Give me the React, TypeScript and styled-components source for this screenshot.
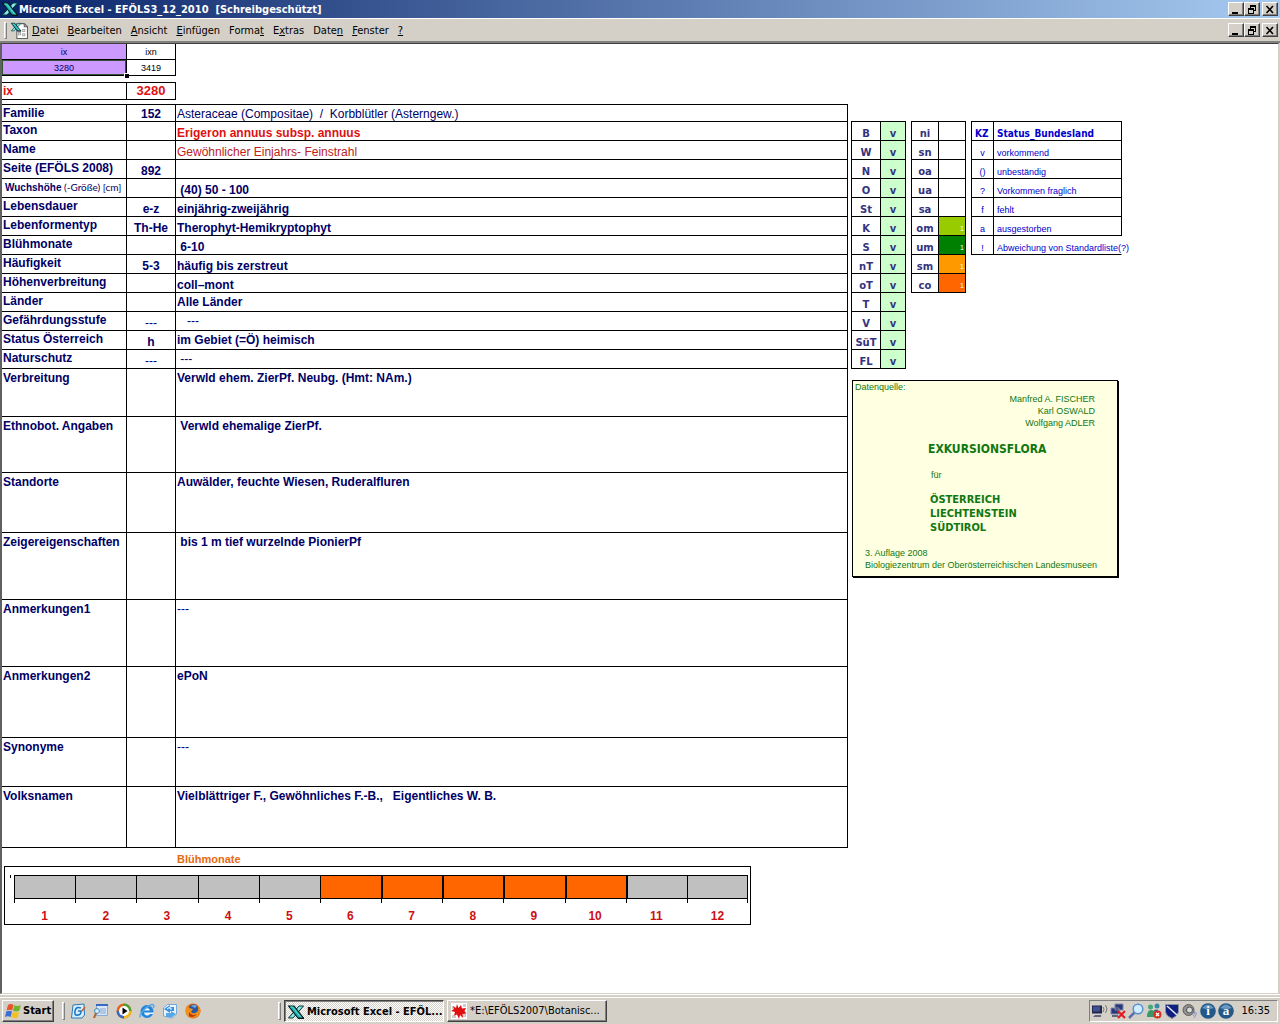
import React from "react";
import styled, { createGlobalStyle, css } from "styled-components";

const face = "#d4d0c8";
const navy = "#000066";
const ui = '"DejaVu Sans Condensed", "DejaVu Sans", sans-serif';
const arial = '"Liberation Sans", Arial, sans-serif';
const narrow = 'Lato, "Liberation Sans", sans-serif';

const GlobalStyle = createGlobalStyle`
  *, *::before { box-sizing: border-box; }
  body { margin: 0; background: ${face}; font-family: ${arial}; font-size: 12px; color: ${navy}; }
  button { font: inherit; color: inherit; padding: 0; border: 0; background: none; }
  table { border-collapse: separate; border-spacing: 0; }
  h1, p { margin: 0; }
`;

const raised = css`
  border: 1px solid;
  border-color: #ffffff #404040 #404040 #ffffff;
  box-shadow: inset -1px -1px 0 #808080;
`;

const Desktop = styled.div`
  display: flex;
  flex-direction: column;
  min-height: 100vh;
`;

const TitleBar = styled.header`
  display: flex;
  align-items: center;
  height: 18px;
  padding: 0 2px;
  gap: 1px;
  background: linear-gradient(90deg, #0a246a, #a6caf0);
`;

const Title = styled.h1`
  flex: 1;
  padding-top: 2px;
  font: bold 11px/16px ${ui};
  color: #fff;
  white-space: pre;
`;

const MenuBar = styled.nav`
  display: flex;
  align-items: center;
  height: 25px;
  padding: 0 2px 0 4px;
  border-top: 1px solid #fff;
  border-bottom: 2px solid #808080;
  background: ${face};
`;

const Grip = styled.span`
  width: 3px;
  height: ${(p: { $h?: number }) => p.$h ?? 17}px;
  border: 1px solid;
  border-color: #fff #808080 #808080 #fff;
`;

const BookIcon = styled.span`
  display: flex;
  padding: 0 4px;
`;

const Menus = styled.div`
  display: flex;
  flex: 1;
  gap: 9px;
  padding-top: 2px;
`;

const MenuButton = styled.button`
  font: 11px/16px ${ui};
  color: #000;
`;

const WindowButtons = styled.div`
  display: flex;
`;

const WindowButton = styled.button`
  ${raised}
  display: flex;
  align-items: center;
  justify-content: center;
  width: 16px;
  height: 14px;
  background: ${face};
  &:last-child { margin-left: 2px; }
`;

const Sheet = styled.main`
  flex: 1;
  display: grid;
  grid-template-columns: minmax(0, 1fr) 430px;
  align-items: start;
  margin-right: 1px;
  border: 1px solid #404040;
  border-left: 2px solid #606060;
  border-right: 1px solid ${face};
  border-bottom: 1px solid ${face};
  background: #fff;
`;

const Left = styled.div`
  min-width: 0;
`;

const Grid = styled.table`
  table-layout: fixed;
  td, th {
    padding: 0 1px;
    border-right: 1px solid #000;
    border-bottom: 1px solid #000;
    white-space: pre;
  }
`;

const IndexTable = styled(Grid)`
  width: 174px;
  font-size: 9px;
  line-height: 14px;
  text-align: center;
  th { font-weight: normal; }
`;

const IndexCell = styled.td<{ $fill?: boolean; $active?: boolean }>`
  position: relative;
  height: 16px;
  color: ${(p) => (p.$fill ? navy : "#000")};
  background: ${(p) => (p.$fill ? "#cc99ff" : "#fff")};
  ${(p) => p.$active && "box-shadow: inset 0 0 0 1px #335533;"}
`;

const FillHandle = styled.span`
  position: absolute;
  z-index: 1;
  right: -3px;
  bottom: -3px;
  width: 5px;
  height: 5px;
  border: solid #fff;
  border-width: 1px 0 0 1px;
  background: #000;
`;

const KeyTable = styled(Grid)`
  width: 174px;
  margin-top: 6px;
  border-top: 1px solid #000;
  font-weight: bold;
  color: #dd1111;
  th { height: 17px; text-align: left; }
  td { font-size: 13px; line-height: 16px; text-align: center; }
`;

const Records = styled(Grid)`
  width: 100%;
  margin-top: 4px;
  border-top: 1px solid #000;
  font-weight: bold;
`;

const Row = styled.tr<{ $h: number }>`
  height: ${(p) => p.$h}px;
`;

const Label = styled.th<{ $small?: boolean; $tall?: boolean }>`
  text-align: left;
  vertical-align: top;
  line-height: ${(p) => (p.$tall ? 18 : 16)}px;
  ${(p) => p.$small && `&& { padding-left: 3px; } font: bold 10px/16px ${arial};`}
  span { font: 10px/16px ${narrow}; }
`;

const Code = styled.td<{ $light?: boolean }>`
  text-align: center;
  vertical-align: bottom;
  line-height: 13px;
  ${(p) => p.$light && "font-weight: normal;"}
`;

type Tone = "plain" | "red" | "crimson";
const Value = styled.td<{ $top?: boolean; $tone?: Tone }>`
  vertical-align: ${(p) => (p.$top ? "top" : "bottom")};
  line-height: ${(p) => (p.$top ? 18 : 13)}px;
  ${(p) => p.$tone === "plain" && "font-weight: normal;"}
  ${(p) => p.$tone === "red" && "color: #dd1111;"}
  ${(p) => p.$tone === "crimson" && "font-weight: normal; color: #bb2222;"}
`;

const ChartTitle = styled.p`
  padding: 5px 0 0 175px;
  height: 18px;
  font: bold 11px/13px ${arial};
  color: #e66a10;
`;

const Chart = styled.section`
  display: flex;
  margin: 0 97px 0 2px;
  height: 59px;
  padding: 8px 2px 0 5px;
  border: 1px solid #000;
`;

const AxisMark = styled.span`
  width: 1px;
  height: 3px;
  margin-right: 3px;
  background: #000;
`;

const Months = styled.ol`
  display: grid;
  grid-template-columns: repeat(12, 1fr);
  flex: 1;
  margin: 0;
  padding: 0;
  list-style: none;
`;

const Month = styled.li<{ $on: boolean; $thick: boolean }>`
  text-align: center;
  font: bold 12px/16px ${arial};
  color: #cc1111;
  &::before {
    content: "";
    display: block;
    height: 24px;
    border: solid #000;
    border-width: 1px 0 1px ${(p) => (p.$thick ? 2 : 1)}px;
    background: ${(p) => (p.$on ? "#ff6600" : "#c0c0c0")};
  }
  &:last-child::before { border-right-width: 1px; }
`;

const Tick = styled.span`
  display: block;
  height: 4px;
  margin-bottom: 5px;
  border-left: 1px solid #000;
  ${Month}:last-child & { border-right: 1px solid #000; }
`;

const Right = styled.aside`
  padding: 77px 0 0 3px;
`;

const Tables = styled.div`
  display: flex;
  align-items: flex-start;
  gap: 5px;
`;

const Legend = styled(Grid)<{ $w: number }>`
  width: ${(p) => p.$w}px;
  border-top: 1px solid #000;
  border-left: 1px solid #000;
  font: 9px/12px ${arial};
  color: #0000cc;
  tr { height: 19px; }
  td, th { vertical-align: bottom; }
`;

const Region = styled.th`
  text-align: center;
  font: bold 10px/12px "DejaVu Sans", sans-serif;
  color: #333380;
`;

const Mark = styled.td<{ $bg?: string }>`
  text-align: center;
  font: bold 10px/12px "DejaVu Sans", sans-serif;
  color: #333380;
  background: ${(p) => p.$bg ?? "#fff"};
`;

const Zone = styled.td<{ $bg: string }>`
  text-align: right;
  font-size: 7px;
  color: #fff;
  background: ${(p) => p.$bg};
`;

const Key = styled.td`
  text-align: center;
`;

const Meaning = styled.td<{ $open?: boolean }>`
  && { padding-left: 3px; ${(p) => p.$open && "border-right-color: transparent;"} }
`;

const Head = styled.th`
  && { padding-left: 3px; }
  text-align: left;
  font: bold 10px/12px ${ui};
  color: #0000cc;
`;

const Source = styled.section`
  width: 266px;
  height: 197px;
  margin: 11px 0 0 1px;
  padding: 0 12px 0 2px;
  border: 1px solid #000;
  box-shadow: 1px 1px 0 #000;
  background: #ffffe1;
  color: #117711;
  font: 9px/12px ${arial};
`;

const Authors = styled.p`
  padding: 0 10px 0 0;
  text-align: right;
`;

const Work = styled.p`
  margin: 8px 0 0 73px;
  font: bold 12px/24px ${ui};
`;

const For = styled.p`
  margin: 8px 0 12px 76px;
`;

const Places = styled.p`
  margin-left: 75px;
  font: bold 11px/14px ${ui};
`;

const Imprint = styled.p`
  margin: 12px 0 0 10px;
  white-space: nowrap;
`;

const TaskBar = styled.footer`
  display: flex;
  align-items: center;
  height: 30px;
  padding: 3px 2px 0;
  border-top: 1px solid #fff;
  background: linear-gradient(${face} 2px, #fff 2px, #fff 3px, ${face} 3px);
  color: #000;
  font: 11px/16px ${ui};
`;

const StartButton = styled.button`
  ${raised}
  display: flex;
  align-items: center;
  gap: 2px;
  width: 52px;
  height: 22px;
  padding-left: 2px;
  font-weight: bold;
`;

const Quick = styled.div`
  display: flex;
  gap: 7px;
  width: 213px;
  padding-left: 5px;
`;

const IconButton = styled.button`
  display: flex;
  width: 16px;
  height: 16px;
`;

const Divider = styled(Grip)`
  margin-left: 8px;
`;

const Tasks = styled.div`
  display: flex;
  flex: 1;
  gap: 3px;
  padding-left: 3px;
`;

const Task = styled.button<{ $on?: boolean }>`
  ${raised}
  display: flex;
  align-items: center;
  gap: 3px;
  width: 160px;
  height: 22px;
  padding-left: 3px;
  white-space: nowrap;
  overflow: hidden;
  ${(p) =>
    p.$on &&
    css`
      font-weight: bold;
      padding-top: 1px;
      border-color: #404040 #fff #fff #404040;
      box-shadow: inset 1px 1px 0 #808080;
      background: repeating-conic-gradient(#fff 0 25%, ${face} 0 50%) 0 0 / 2px 2px;
    `}
`;

const Tray = styled.div`
  display: flex;
  align-items: center;
  gap: 2px;
  height: 22px;
  padding: 0 7px 0 2px;
  border: 1px solid;
  border-color: #808080 #fff #fff #808080;
  time { padding-left: 5px; }
`;

const Svg = ({ children, s = 16 }: { children: React.ReactNode; s?: number }) => (
  <svg width={s} height={s} viewBox="0 0 16 16" aria-hidden="true">
    {children}
  </svg>
);

const xMark = (
  <>
    <path d="M11 2h4.500L5 14H.5z" fill="#8ce8e8" stroke="#003838" strokeWidth="1" />
    <path d="M.5 2h5.500L15.500 14H10z" fill="#20b0b0" stroke="#001818" strokeWidth="1.200" />
    <path d="M2.500 3h2l8.500 10.500" fill="none" stroke="#60dcdc" />
    <path d="M10 14.500h6" stroke="#001818" />
  </>
);

const ExcelIcon = () => <Svg>{xMark}</Svg>;

const BookDrawing = () => (
  <Svg s={17}>
    <path d="M5.500 1.500h7l3 3v11h-10z" fill="#fff" stroke="#606060" />
    <path d="M12.500 1.500v3h3" fill="none" stroke="#606060" />
    <path d="M7 10h2v2H7zM11 7h2v2h-2zM11 11h2v2h-2z" fill="#fff" stroke="#a8a8a8" />
    <g transform="scale(.6)">{xMark}</g>
  </Svg>
);

const Min = () => (
  <svg width="10" height="9" viewBox="0 0 10 9" shapeRendering="crispEdges" aria-hidden="true">
    <path d="M1 7h6v2H1z" />
  </svg>
);
const Restore = () => (
  <svg width="10" height="9" viewBox="0 0 10 9" shapeRendering="crispEdges" aria-hidden="true">
    <path d="M3 0h6v6H7V5h1V2H4v1H3zM1 3h6v6H1zM2 5v3h4V5z" fillRule="evenodd" />
  </svg>
);
const Close = () => (
  <svg width="10" height="9" viewBox="0 0 10 9" aria-hidden="true">
    <path d="M1.500 1l6.500 7M8 1L1.500 8" stroke="#000" strokeWidth="1.600" />
  </svg>
);

const Flag = () => (
  <Svg>
    <path d="M3 2q3-2 5.500 0L7.200 7.500Q4.500 6 1.500 7.500z" fill="#e8542c" />
    <path d="M9.300 2.300q3 1.500 6.500 0L14.300 7.800q-3 1.500-6.300 0z" fill="#6fb52c" />
    <path d="M1.300 8.500q3-1.500 5.700 0L5.700 14Q3 12.500 0 14z" fill="#3a6fd8" />
    <path d="M7.800 8.800q3 1.500 6.300 0L12.800 14.500q-3 1.500-6.300 0z" fill="#f4c020" />
  </Svg>
);

const OutlookIcon = () => (
  <Svg>
    <path d="M3 2l11-1 .5 11-2.500 3H1.500z" fill="#dceefc" stroke="#2878b8" />
    <path d="M11 5q-5-2-6 3t3 4q3 0 3-4H8" fill="none" stroke="#1878c8" strokeWidth="1.600" />
    <path d="M12 8l3-4" stroke="#d06020" strokeWidth="1.500" />
  </Svg>
);
const DesktopIcon = () => (
  <Svg>
    <path d="M3.500 1.500h11v11h-11z" fill="#d8e8fa" stroke="#88a8d8" />
    <path d="M3 1h12v2H3z" fill="#3868c0" />
    <path d="M7 6h6M7 8h6M7 10h6" stroke="#8aa4d0" />
    <circle cx="4" cy="8" r="2.500" fill="#c8f0ff" stroke="#5088b0" />
    <path d="M3 10l-2 5" stroke="#b06030" strokeWidth="2" />
  </Svg>
);
const PlayerIcon = () => (
  <Svg>
    <circle cx="8" cy="8" r="7.500" fill="#e86018" />
    <path d="M8 8V.5A7.500 7.500 0 0115.500 8z" fill="#50a030" />
    <path d="M8 8h7.500A7.500 7.500 0 018 15.500z" fill="#f0b820" />
    <path d="M8 8v7.500A7.500 7.500 0 01.5 8z" fill="#3868c8" />
    <circle cx="8" cy="8" r="5" fill="#fff" />
    <path d="M6.500 4.500l5 3.500-5 3.500z" />
  </Svg>
);
const ExplorerIcon = () => (
  <Svg>
    <circle cx="8" cy="8.500" r="6.500" fill="#2484d8" />
    <path d="M5 7.500q.5-2.500 3-2.500t3 2.500zM5 9.500h9.500v1.500h-3.500q-1 1.500-3 1.500-2.500 0-3-3z" fill="#e4f2fc" />
    <path d="M1.500 14.500C-1 12 8 2.500 13 1.500c3 0 2 2 1 3.500" fill="none" stroke="#58a8e8" strokeWidth="1.400" />
  </Svg>
);
const MailIcon = () => (
  <Svg>
    <path d="M1.500 5l4-3.500h9V11l-4 4-9-2z" fill="#e8f4ff" stroke="#78a8d8" />
    <path d="M2 6l6-4v2h4v4H8v2z" fill="#3890e0" />
    <path d="M14 11l-5-3v2H4v4h5v1z" fill="#58a8e8" />
    <path d="M5 6l3-2v2h2" stroke="#fff" fill="none" />
  </Svg>
);
const FoxIcon = () => (
  <Svg>
    <circle cx="8" cy="8" r="7.500" fill="#e06010" />
    <circle cx="8.500" cy="6.500" r="5" fill="#2858a8" />
    <path d="M6 3q3-2 6 0l-2 2z" fill="#70a8e0" />
    <path d="M1 4l2-2 1 3 4 1-2 3q3 3 7-1 1-4-1-6 5 3 3 8-3 6-9 5Q-1 12 1 4z" fill="#f09018" />
    <path d="M4 9q3 5 8 2-4 5-8 2z" fill="#b83808" />
  </Svg>
);
const LeafIcon = () => (
  <Svg>
    <path d="M0 0h16v16H0z" fill="#fff" />
    <path d="M1 3h2v3H1zM12 1h3v3h-3zM1 12h4v3H1zM12 11h3v3h-3z" fill="#ccc" />
    <path d="M6 1l1.500 4L10 2l1 3.500L15 5l-1.500 3 2 2.500-4 .5.500 4-3-3L8 16l-2-4.500-3 1L4 9 0 8l3-2-1-3 3 2z" fill="#e01010" />
  </Svg>
);
const Terminal = () => (
  <Svg>
    <path d="M0 2.500h10v8H0z" fill="#202850" />
    <path d="M1 3.500h7v5H1z" fill="#405090" />
    <path d="M3 12h6v2H1z" fill="#606878" />
    <path d="M11 4q2 2 0 5M13.500 2q3 4 0 8" fill="none" stroke="#777" />
  </Svg>
);
const NetworkDown = () => (
  <Svg>
    <path d="M5 1h8v6H5zM1 5h8v6H1z" fill="#28387c" stroke="#8088a8" />
    <path d="M2 12h6v2H2z" fill="#606878" />
    <path d="M8 8l7 7M15 8l-7 7" stroke="#e02020" strokeWidth="2.200" />
  </Svg>
);
const Search = () => (
  <Svg>
    <path d="M7 9l-6 6" stroke="#5870a8" strokeWidth="2.500" />
    <circle cx="10" cy="6" r="4.800" fill="#d0ecff" stroke="#5890d0" strokeWidth="1.500" />
  </Svg>
);
const Messenger = () => (
  <Svg>
    <circle cx="4.500" cy="4" r="2.500" fill="#48a878" />
    <path d="M1 14q0-7 4-7t5 5v2z" fill="#389868" />
    <circle cx="11" cy="3" r="2.500" fill="#3888a8" />
    <path d="M8 7q5-2 6 4H9z" fill="#286890" />
    <circle cx="11.500" cy="11.500" r="4" fill="#d83020" />
    <path d="M10 10l3 3M13 10l-3 3" stroke="#fff" strokeWidth="1.300" />
  </Svg>
);
const Shield = () => (
  <Svg>
    <path d="M1.500 1.500h13V9q-1 4-6.500 6.500Q2 13 1.500 9z" fill="#102080" stroke="#8890a0" />
    <path d="M3 3l10 9" stroke="#e8e8f8" strokeWidth="1.500" />
  </Svg>
);
const Speaker = () => (
  <Svg>
    <circle cx="6.500" cy="7" r="5.500" fill="#909090" stroke="#606060" />
    <circle cx="7.500" cy="7" r="3" fill="#d8d8d8" stroke="#505050" />
    <path d="M12 8q2 2-1 5M14 9q1 3-2 6" fill="none" stroke="#8890d0" />
  </Svg>
);
const Disc = ({ letter }: { letter: string }) => (
  <Svg>
    <circle cx="8" cy="8" r="7.800" fill="#245888" />
    <path d="M2 5q6-7 12 0-6 2-12 0z" fill="#6898c0" />
    <text x="8" y="12" textAnchor="middle" fill="#fff" fontFamily="Liberation Serif" fontWeight="bold" fontSize="13">
      {letter}
    </text>
  </Svg>
);

const Controls = ({ target }: { target: string }) => (
  <WindowButtons>
    <WindowButton aria-label={`${target} minimieren`}><Min /></WindowButton>
    <WindowButton aria-label={`${target} wiederherstellen`}><Restore /></WindowButton>
    <WindowButton aria-label={`${target} schließen`}><Close /></WindowButton>
  </WindowButtons>
);

const menus: [string, string, string][] = [
  ["", "D", "atei"], ["", "B", "earbeiten"], ["", "A", "nsicht"], ["", "E", "infügen"],
  ["Forma", "t", ""], ["E", "x", "tras"], ["Date", "n", ""], ["", "F", "enster"], ["", "?", ""],
];

type Rec = { label: string; note?: string; code?: string; value?: string; h?: number; top?: boolean; tone?: Tone };
const records: Rec[] = [
  { label: "Familie", code: "152", value: "Asteraceae (Compositae)  /  Korbblütler (Asterngew.)", h: 17, tone: "plain" },
  { label: "Taxon", value: "Erigeron annuus subsp. annuus", tone: "red" },
  { label: "Name", value: "Gewöhnlicher Einjahrs- Feinstrahl", tone: "crimson" },
  { label: "Seite (EFÖLS 2008)", code: "892" },
  { label: "Wuchshöhe", note: " (-Größe) [cm]", value: " (40) 50 - 100" },
  { label: "Lebensdauer", code: "e-z", value: "einjährig-zweijährig" },
  { label: "Lebenformentyp", code: "Th-He", value: "Therophyt-Hemikryptophyt" },
  { label: "Blühmonate", value: " 6-10" },
  { label: "Häufigkeit", code: "5-3", value: "häufig bis zerstreut" },
  { label: "Höhenverbreitung", value: "coll–mont" },
  { label: "Länder", value: "Alle Länder", top: true },
  { label: "Gefährdungsstufe", code: "---", value: "   ---", top: true, tone: "plain" },
  { label: "Status Österreich", code: "h", value: "im Gebiet (=Ö) heimisch", top: true },
  { label: "Naturschutz", code: "---", value: " ---", top: true, tone: "plain" },
  { label: "Verbreitung", value: "Verwld ehem. ZierPf. Neubg. (Hmt: NAm.)", h: 48, top: true },
  { label: "Ethnobot. Angaben", value: " Verwld ehemalige ZierPf.", h: 56, top: true },
  { label: "Standorte", value: "Auwälder, feuchte Wiesen, Ruderalfluren", h: 60, top: true },
  { label: "Zeigereigenschaften", value: " bis 1 m tief wurzelnde PionierPf", h: 67, top: true },
  { label: "Anmerkungen1", value: "---", h: 67, top: true, tone: "plain" },
  { label: "Anmerkungen2", value: "ePoN", h: 71, top: true },
  { label: "Synonyme", value: "---", h: 49, top: true, tone: "plain" },
  { label: "Volksnamen", value: "Vielblättriger F., Gewöhnliches F.-B.,   Eigentliches W. B.", h: 61, top: true },
];

const regions = ["B", "W", "N", "O", "St", "K", "S", "nT", "oT", "T", "V", "SüT", "FL"];
const zones: [string, string?][] = [
  ["ni"], ["sn"], ["oa"], ["ua"], ["sa"],
  ["om", "#99cc00"], ["um", "#008000"], ["sm", "#ff9900"], ["co", "#ff6600"],
];
const states = [
  ["v", "vorkommend"], ["()", "unbeständig"], ["?", "Vorkommen fraglich"],
  ["f", "fehlt"], ["a", "ausgestorben"], ["!", "Abweichung von Standardliste(?)"],
];

const quick: [string, React.FC][] = [
  ["Outlook", OutlookIcon], ["Desktop anzeigen", DesktopIcon], ["Media Player", PlayerIcon],
  ["Internet Explorer", ExplorerIcon], ["E-Mail", MailIcon], ["Firefox", FoxIcon],
];

export default function App() {
  return (
    <Desktop>
      <GlobalStyle />
      <TitleBar>
        <ExcelIcon />
        <Title>Microsoft Excel - EFÖLS3_12_2010  [Schreibgeschützt]</Title>
        <Controls target="Excel" />
      </TitleBar>
      <MenuBar>
        <Grip />
        <BookIcon><BookDrawing /></BookIcon>
        <Menus>
          {menus.map(([a, key, b]) => (
            <MenuButton key={a + key + b}>{a}<u>{key}</u>{b}</MenuButton>
          ))}
        </Menus>
        <Controls target="Mappe" />
      </MenuBar>

      <Sheet>
        <Left>
          <IndexTable>
            <colgroup><col style={{ width: 125 }} /><col /></colgroup>
            <tbody>
              <tr><IndexCell as="th" $fill>ix</IndexCell><IndexCell as="th">ixn</IndexCell></tr>
              <tr><IndexCell $fill $active>3280<FillHandle /></IndexCell><IndexCell>3419</IndexCell></tr>
            </tbody>
          </IndexTable>
          <KeyTable>
            <colgroup><col style={{ width: 125 }} /><col /></colgroup>
            <tbody><tr><th>ix</th><td>3280</td></tr></tbody>
          </KeyTable>
          <Records>
            <colgroup><col style={{ width: 125 }} /><col style={{ width: 49 }} /><col /></colgroup>
            <tbody>
              {records.map((r) => (
                <Row key={r.label} $h={r.h ?? 19}>
                  <Label $small={!!r.note} $tall={(r.h ?? 19) > 19}>{r.label}{r.note && <span>{r.note}</span>}</Label>
                  <Code $light={r.code === "---"}>{r.code}</Code>
                  <Value $top={r.top} $tone={r.tone}>{r.value}</Value>
                </Row>
              ))}
            </tbody>
          </Records>
          <ChartTitle>Blühmonate</ChartTitle>
          <Chart aria-label="Blühmonate">
            <AxisMark />
            <Months>
              {Array.from({ length: 12 }, (_, i) => i + 1).map((m) => (
                <Month key={m} $on={m >= 6 && m <= 10} $thick={m >= 7 && m <= 11}><Tick />{m}</Month>
              ))}
            </Months>
          </Chart>
        </Left>

        <Right>
          <Tables>
            <Legend $w={55}>
              <colgroup><col style={{ width: 29 }} /><col /></colgroup>
              <tbody>
                {regions.map((r) => (
                  <tr key={r}><Region>{r}</Region><Mark $bg="#ccffcc">v</Mark></tr>
                ))}
              </tbody>
            </Legend>
            <Legend $w={55}>
              <colgroup><col style={{ width: 27 }} /><col /></colgroup>
              <tbody>
                {zones.map(([z, bg]) => (
                  <tr key={z}><Region>{z}</Region><Zone $bg={bg ?? "#fff"}>{bg && "1"}</Zone></tr>
                ))}
              </tbody>
            </Legend>
            <Legend $w={151}>
              <colgroup><col style={{ width: 22 }} /><col /></colgroup>
              <tbody>
                <tr><Head>KZ</Head><Head>Status_Bundesland</Head></tr>
                {states.map(([k, t]) => (
                  <tr key={k}><Key>{k}</Key><Meaning $open={k === "!"}>{t}</Meaning></tr>
                ))}
              </tbody>
            </Legend>
          </Tables>
          <Source>
            <p>Datenquelle:</p>
            <Authors>Manfred A. FISCHER<br />Karl OSWALD<br />Wolfgang ADLER</Authors>
            <Work>EXKURSIONSFLORA</Work>
            <For>für</For>
            <Places>ÖSTERREICH<br />LIECHTENSTEIN<br />SÜDTIROL</Places>
            <Imprint>3. Auflage 2008<br />Biologiezentrum der Oberösterreichischen Landesmuseen</Imprint>
          </Source>
        </Right>
      </Sheet>

      <TaskBar>
        <StartButton><Flag />Start</StartButton>
        <Divider $h={18} />
        <Quick>
          {quick.map(([name, Icon]) => (
            <IconButton key={name} aria-label={name}><Icon /></IconButton>
          ))}
        </Quick>
        <Grip $h={18} />
        <Tasks>
          <Task $on><ExcelIcon />Microsoft Excel - EFÖL...</Task>
          <Task><LeafIcon />*E:\EFÖLS2007\Botanisc...</Task>
        </Tasks>
        <Tray>
          <Terminal /><NetworkDown /><Search /><Messenger /><Shield /><Speaker />
          <Disc letter="i" /><Disc letter="a" />
          <time>16:35</time>
        </Tray>
      </TaskBar>
    </Desktop>
  );
}
